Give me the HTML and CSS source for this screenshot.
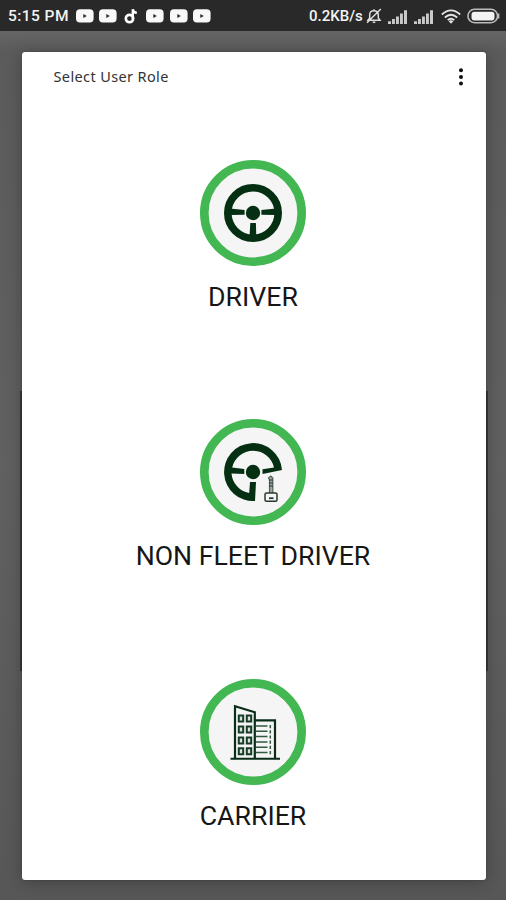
FILE: index.html
```html
<!DOCTYPE html>
<html lang="en">
<head>
<meta charset="utf-8">
<title>Select User Role</title>
<link rel="stylesheet" href="styles.css">
</head>
<body>
<svg class="defs" aria-hidden="true">
  <symbol id="video" viewBox="0 0 18 14"><rect y=".3" width="17.6" height="13.2" rx="4" fill="#f8f8f8"/><path d="M7.3 5 10.8 7 7.3 9Z" fill="#292929"/></symbol>
  <symbol id="signal" viewBox="0 0 20 15"><path d="M0 12.2h3V15H0zM4 10h2.9v5H4zM8 7.5h2.9V15H8zM12 4.5h2.9V15H12zM16 1.3h3V15h-3z" fill="#c9c9c9"/></symbol>
</svg>
<header class="status">
  <span class="clock">5:15 PM</span>
  <div class="notices">
    <svg class="video"><use href="#video"/></svg>
    <svg class="video"><use href="#video"/></svg>
    <svg class="note" viewBox="0 0 18 16"><circle cx="6.5" cy="10.6" r="3.7" fill="none" stroke="#fff" stroke-width="2.6"/><path d="M9.8 11V1.2c.4 2.3 1.8 3.5 4 3.6" fill="none" stroke="#fff" stroke-width="2.4"/></svg>
    <svg class="video"><use href="#video"/></svg>
    <svg class="video"><use href="#video"/></svg>
    <svg class="video"><use href="#video"/></svg>
  </div>
  <div class="system">
    <span class="speed">0.2KB/s</span>
    <svg class="bell" viewBox="0 0 16 16"><path d="M2 12.2h12L12.3 10V6.8C12.3 4.3 10.3 2.8 8 2.8S3.7 4.3 3.7 6.8V10Z M8 3V1.3 M6.7 14.2h2.6 M1 14.8 14.8 1" fill="none" stroke="#ddd" stroke-width="1.5"/></svg>
    <svg class="signal"><use href="#signal"/></svg>
    <svg class="signal"><use href="#signal"/></svg>
    <svg class="wifi" viewBox="0 0 20 15"><path d="M.8 5.5Q10-2.8 19.2 5.5M3.8 8.5Q10 3 16.2 8.5M6.7 11.2Q10 8.3 13.3 11.2" fill="none" stroke="#e4e4e4" stroke-width="1.7"/><path d="m7.7 12.2 2.3 2.5 2.3-2.5Q10 10.5 7.7 12.2Z" fill="#e4e4e4"/></svg>
    <svg class="battery" viewBox="0 0 33 16"><rect x="1" y="1.3" width="29.5" height="13.4" rx="6.5" fill="none" stroke="#bbb" stroke-width="1.6"/><rect x="4.5" y="3.8" width="23" height="8.8" rx="3" fill="#f3f3f3"/><path d="M31.6 5.5v5" stroke="#bbb" stroke-width="1.6"/></svg>
  </div>
</header>
<main class="backdrop">
  <section class="dialog">
    <div class="toolbar">
      <h1 class="title">Select User Role</h1>
      <svg class="more" viewBox="0 0 6 18"><circle cx="3" cy="2.3" r="2"/><circle cx="3" cy="9" r="2"/><circle cx="3" cy="15.6" r="2"/></svg>
    </div>
    <div class="roles">
      <div class="role">
        <svg class="badge" viewBox="0 0 106 106">
          <circle class="disc" cx="53" cy="53" r="48.7"/>
          <circle class="rim" cx="53" cy="53" r="25.2"/>
          <circle class="dark" cx="53" cy="53" r="7.2"/>
          <path class="dark" d="M30 48.5 44.6 50V54.8L30 55ZM76 48.5 61.4 50V54.8L76 55ZM50.3 63h5.6l.4 14h-6.8Z"/>
        </svg>
        <span class="label">DRIVER</span>
      </div>
      <div class="role role-non-fleet">
        <svg class="badge" viewBox="0 0 106 106">
          <circle class="disc" cx="53" cy="53" r="48.7"/>
          <path class="dark" d="M55 82A29 29 0 1 1 82 51L62.5 55V50.2L74 48.5A21.4 21.4 0 0 0 32.2 48.5L44.3 50V55L31.5 54.5A21.5 21.5 0 0 0 49.2 74L50 63H56Z"/>
          <circle class="dark" cx="53" cy="53" r="7.2"/>
          <path d="M69.5 74V60.8l-1-2 2.3-1.8 2 2V74" fill="#9ba69e" stroke="#526459" stroke-width="1.2"/>
          <path d="M69 61h4M69 64h4M69 67h4" stroke="#263b2d"/>
          <rect x="65" y="74" width="12" height="8.2" rx="1.5" fill="#f5f5f5" stroke="#263b2d" stroke-width="1.5"/>
          <path d="M69 79.2h4.5" stroke="#263b2d" stroke-width="1.8"/>
        </svg>
        <span class="label">NON FLEET DRIVER</span>
      </div>
      <div class="role role-carrier">
        <svg class="badge" viewBox="0 0 106 106">
          <circle class="disc" cx="53" cy="53" r="48.7"/>
          <path d="M35 79V27.3L54.8 33.2V79M54.8 41.3H75V79" fill="none" stroke="#082d19" stroke-width="2.2"/>
          <path d="M30.5 79.7h49.5" stroke="#082d19" stroke-width="2"/>
          <path d="M38.8 36.5h4.4v6h-4.4zM46.8 36.5h4.4v6h-4.4zM38.8 47.5h4.4v6h-4.4zM46.8 47.5h4.4v6h-4.4zM38.8 58.5h4.4v6h-4.4zM46.8 58.5h4.4v6h-4.4zM38.8 69.3h4.4v6h-4.4zM46.8 69.3h4.4v6h-4.4z" fill="#dbe1dc" stroke="#163c26" stroke-width="2"/>
          <path d="M56 47h11.5M56 52.3h11.5M56 57.5h11.5M56 63h11.5M56 68.3h11.5M56 73.5h11.5" stroke="#315a40" stroke-width="1.6"/>
          <path d="M70.3 46v31" stroke="#315a40" stroke-width="1.5" stroke-dasharray="3.2 2"/>
        </svg>
        <span class="label">CARRIER</span>
      </div>
    </div>
  </section>
</main>
</body>
</html>
```
FILE: styles.css
```css
* { box-sizing: border-box; }
body {
  margin: 0;
  height: 900px;
  display: flex;
  flex-direction: column;
  overflow: hidden;
  background: #5f5f5f;
  font-family: Roboto, "Liberation Sans", sans-serif;
}
svg { display: block; flex: none; }
.defs { display: none; }
.status {
  height: 31px;
  flex: none;
  display: flex;
  align-items: center;
  padding: 1px 6px 0 8px;
  background: #292929;
  color: #f4f4f4;
  font-size: 15.5px;
  font-weight: 500;
  line-height: 20px;
  white-space: nowrap;
}
.clock { width: 68px; letter-spacing: .45px; }
.notices { display: flex; align-items: center; gap: 5.4px; }
.video { width: 18px; height: 14px; }
.note { width: 18px; height: 16px; }
.system { margin-left: auto; display: flex; align-items: center; }
.speed { width: 57px; font-size: 15px; }
.bell { width: 16px; height: 16px; }
.signal { width: 20px; height: 15px; margin-left: 6px; }
.wifi { width: 20px; height: 15px; margin-left: 7px; }
.battery { width: 33px; height: 16px; margin-left: 6px; }
.backdrop {
  position: relative;
  z-index: 0;
  flex: 1;
  padding: 21px 20.5px 20px 21.5px;
  background: linear-gradient(#656565, #5b5b5b 20px, #606060 50%, #575757);
}
.dialog {
  position: relative;
  height: 828px;
  border-radius: 3px;
  background: #fff;
  box-shadow: 0 2px 16px rgba(0, 0, 0, .28), 0 0 1px #303030;
}
.dialog::before {
  content: "";
  position: absolute;
  z-index: -1;
  top: 339px;
  left: -2px;
  right: -2px;
  height: 280px;
  background: #383838;
}
.toolbar {
  height: 48px;
  display: flex;
  align-items: center;
  justify-content: space-between;
  padding: 0 22px 0 32px;
}
.title {
  margin: 0;
  color: #333;
  font: 400 14.5px/20px "Noto Sans", sans-serif;
  letter-spacing: .38px;
}
.more { width: 6px; height: 18px; margin-top: 1px; fill: #111; }
.roles { display: flex; flex-direction: column; padding: 60px 1px 0 0; }
.role { height: 259.5px; display: flex; flex-direction: column; align-items: center; }
.role-non-fleet { position: relative; top: -.5px; }
.badge { width: 106px; height: 106px; }
.disc { fill: #f5f5f5; stroke: #42b752; stroke-width: 8.6; }
.rim { fill: none; stroke: #052f13; stroke-width: 7.6; }
.dark { fill: #052f13; }
.label { margin-top: 15px; color: #161616; font-size: 26.7px; line-height: 32px; }
```
